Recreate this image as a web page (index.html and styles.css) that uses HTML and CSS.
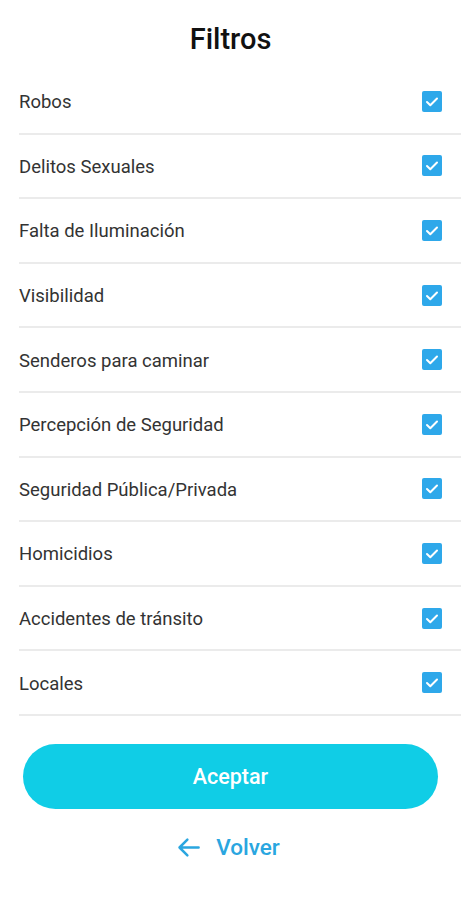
FILE: index.html
```html
<!DOCTYPE html>
<html lang="es">
<head>
	<meta charset="UTF-8">
	<title>Filtros</title>
	<link rel="stylesheet" href="styles.css">
</head>
<body>
	<div class="page">
		<h1 class="title">Filtros</h1>

		<ul class="filters">
			<li class="row"><span>Robos</span><span class="check"><svg viewBox="0 0 20 20"><path d="M5 10.5l3.3 3.2L15 7"/></svg></span></li>
			<li class="row"><span>Delitos Sexuales</span><span class="check"><svg viewBox="0 0 20 20"><path d="M5 10.5l3.3 3.2L15 7"/></svg></span></li>
			<li class="row"><span>Falta de Iluminación</span><span class="check"><svg viewBox="0 0 20 20"><path d="M5 10.5l3.3 3.2L15 7"/></svg></span></li>
			<li class="row"><span>Visibilidad</span><span class="check"><svg viewBox="0 0 20 20"><path d="M5 10.5l3.3 3.2L15 7"/></svg></span></li>
			<li class="row"><span>Senderos para caminar</span><span class="check"><svg viewBox="0 0 20 20"><path d="M5 10.5l3.3 3.2L15 7"/></svg></span></li>
			<li class="row"><span>Percepción de Seguridad</span><span class="check"><svg viewBox="0 0 20 20"><path d="M5 10.5l3.3 3.2L15 7"/></svg></span></li>
			<li class="row"><span>Seguridad Pública/Privada</span><span class="check"><svg viewBox="0 0 20 20"><path d="M5 10.5l3.3 3.2L15 7"/></svg></span></li>
			<li class="row"><span>Homicidios</span><span class="check"><svg viewBox="0 0 20 20"><path d="M5 10.5l3.3 3.2L15 7"/></svg></span></li>
			<li class="row"><span>Accidentes de tránsito</span><span class="check"><svg viewBox="0 0 20 20"><path d="M5 10.5l3.3 3.2L15 7"/></svg></span></li>
			<li class="row"><span>Locales</span><span class="check"><svg viewBox="0 0 20 20"><path d="M5 10.5l3.3 3.2L15 7"/></svg></span></li>
		</ul>

		<button class="accept">Aceptar</button>

		<a class="back" href="#">
			<svg viewBox="0 0 24 24"><path d="M21 12H4M11 5l-7 7 7 7"/></svg>
			Volver
		</a>
	</div>
</body>
</html>
```

FILE: styles.css
```css
*{
	margin: 0;
	padding: 0;
	box-sizing: border-box;
}
body{
	font-family: Roboto, "Liberation Sans", sans-serif;
	background: #fff;
	color: #333;
}
.page{
	display: flex;
	flex-direction: column;
	width: 461px;
}
.title{
	height: 70px;
	padding-top: 22px;
	text-align: center;
	font-size: 29px;
	font-weight: 500;
	line-height: 34px;
	color: #111;
}
.filters{
	list-style: none;
	margin-left: 19px;
}
.row{
	display: flex;
	justify-content: space-between;
	align-items: center;
	height: 64.6px;
	padding-right: 19px;
	border-bottom: 2px solid #ebebeb;
	font-size: 18.5px;
	color: #333;
}
.row span:first-child{
	padding-top: 2px;
}
.check{
	display: flex;
	width: 20px;
	height: 21px;
	border-radius: 2px;
	background: #2ea8ea;
}
.check svg{
	width: 20px;
	height: 21px;
	fill: none;
	stroke: #fff;
	stroke-width: 2;
	stroke-linecap: round;
	stroke-linejoin: round;
}
.accept{
	margin: 28px 23px 0;
	height: 65px;
	border: none;
	border-radius: 33px;
	background: #10cde6;
	color: #fff;
	font-family: Roboto, "Liberation Sans", sans-serif;
	font-size: 21.5px;
	font-weight: 500;
}
.back{
	display: flex;
	align-items: center;
	justify-content: center;
	gap: 14px;
	margin-top: 25px;
	margin-right: 6px;
	color: #2aa6e0;
	font-size: 22.5px;
	font-weight: 500;
	text-decoration: none;
}
.back svg{
	width: 27px;
	height: 27px;
	fill: none;
	stroke: #2aa6e0;
	stroke-width: 2.2;
	stroke-linecap: round;
	stroke-linejoin: round;
}
```
